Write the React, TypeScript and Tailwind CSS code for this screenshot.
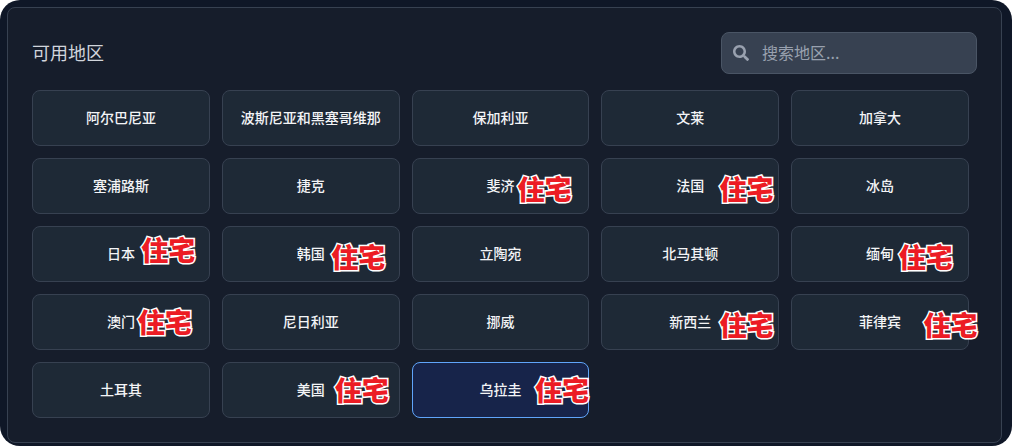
import { useState } from 'react'
import clsx from 'clsx'
import { FaSearch } from 'react-icons/fa'

type Region = {
  name: string
  // where the residential tag sits on the card
  tag?: string
}

const REGIONS: Region[] = [
  { name: '阿尔巴尼亚' },
  { name: '波斯尼亚和黑塞哥维那' },
  { name: '保加利亚' },
  { name: '文莱' },
  { name: '加拿大' },
  { name: '塞浦路斯' },
  { name: '捷克' },
  { name: '斐济', tag: 'left-3/4 top-[55%]' },
  { name: '法国', tag: 'left-[82%] top-[55%]' },
  { name: '冰岛' },
  { name: '日本', tag: 'left-[77%] top-[43%]' },
  { name: '韩国', tag: 'left-[77%] top-[55%]' },
  { name: '立陶宛' },
  { name: '北马其顿' },
  { name: '缅甸', tag: 'left-[76%] top-[55%]' },
  { name: '澳门', tag: 'left-3/4 top-1/2' },
  { name: '尼日利亚' },
  { name: '挪威' },
  { name: '新西兰', tag: 'left-[82%] top-[55%]' },
  { name: '菲律宾', tag: 'left-[90%] top-[55%]' },
  { name: '土耳其' },
  { name: '美国', tag: 'left-[79%] top-1/2' },
  { name: '乌拉圭', tag: 'left-[85%] top-1/2' },
]

function RegionCard({ region, selected, onSelect }: { region: Region; selected: boolean; onSelect: () => void }) {
  return (
    <button
      type="button"
      aria-pressed={selected}
      onClick={onSelect}
      className={clsx(
        'relative h-14 rounded-lg border px-2 pb-[2px] text-sm font-medium whitespace-nowrap text-gray-100',
        selected ? 'border-[#60a5fa] bg-[#17244a]' : 'border-[#374151] bg-[#1e2936]',
      )}
    >
      {region.name}
      {region.tag && (
        <span
          className={clsx(
            'absolute -translate-x-1/2 -translate-y-1/2 text-[27px] leading-8 font-black text-[#ec1c24] [-webkit-text-stroke:3px_#fff] [paint-order:stroke_fill]',
            region.tag,
          )}
        >
          住宅
        </span>
      )}
    </button>
  )
}

export default function App() {
  const [query, setQuery] = useState('')
  const [selected, setSelected] = useState('乌拉圭')

  const visible = REGIONS.filter(r => r.name.includes(query.trim()))

  return (
    <div
      lang="zh-CN"
      className="rounded-[20px] bg-[#0f1727] pt-[7px] pr-[10px] pb-[3px] pl-[7px] font-['Noto_Sans_CJK_SC',sans-serif]"
    >
      <section className="rounded-lg border border-[#374151] bg-[#161d2b] p-6">
        <header className="mb-4 flex items-center justify-between">
          <h2 className="pb-[2px] text-lg text-gray-300">可用地区</h2>
          <div className="relative w-64">
            <FaSearch className="pointer-events-none absolute top-1/2 left-3 size-4 -translate-y-1/2 text-gray-400" />
            <input
              type="text"
              aria-label="搜索地区"
              value={query}
              onChange={e => setQuery(e.target.value)}
              placeholder="搜索地区..."
              className="h-[42px] w-full rounded-lg border border-gray-600 bg-[#374151] pr-4 pb-[2px] pl-10 text-base text-white placeholder:text-gray-400"
            />
          </div>
        </header>

        <div className="grid grid-cols-5 gap-3 pr-2">
          {visible.map(r => (
            <RegionCard
              key={r.name}
              region={r}
              selected={r.name === selected}
              onSelect={() => setSelected(r.name)}
            />
          ))}
        </div>
      </section>
    </div>
  )
}
